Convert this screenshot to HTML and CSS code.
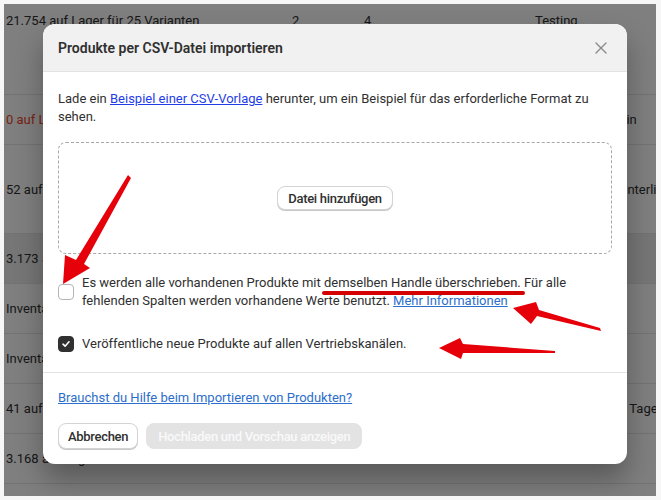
FILE: index.html
```html
<!DOCTYPE html>
<html lang="de">
<head>
    <meta charset="UTF-8">
    <meta name="viewport" content="width=device-width, initial-scale=1.0">
    <title>Produkte per CSV-Datei importieren</title>
    <link rel="stylesheet" href="styles.css">
</head>
<body>
    <div class="screen">
        <!-- Produkttabelle im Hintergrund -->
        <div class="table">
            <div class="row row-first">
                <span>21.754 auf Lager für 25 Varianten</span><span>2</span><span>4</span><span>Testing</span><span></span>
            </div>
            <div class="row">
                <span class="out">0 auf Lager für 1 Variante</span><span>1</span><span>1</span><span>Testing</span><span>Ein</span>
            </div>
            <div class="row row-tall">
                <span>52 auf Lager für 4 Varianten</span><span>1</span><span>2</span><span>Testing</span><span>Unterliegt</span>
            </div>
            <div class="row row-active">
                <span>3.173 auf Lager für 12 Varianten</span><span>2</span><span>3</span><span>Testing</span><span></span>
            </div>
            <div class="row">
                <span>Inventar wird nicht verfolgt</span><span>1</span><span>1</span><span>Testing</span><span></span>
            </div>
            <div class="row">
                <span>Inventar wird nicht verfolgt</span><span>1</span><span>1</span><span>Testing</span><span></span>
            </div>
            <div class="row">
                <span>41 auf Lager für 2 Varianten</span><span>1</span><span>2</span><span>Testing</span><span>3 Tage</span>
            </div>
            <div class="row">
                <span>3.168 auf Lager für 3 Varianten</span><span>1</span><span>1</span><span>Test</span><span></span>
            </div>
            <div class="row"></div>
        </div>

        <div class="backdrop">
            <div class="modal">
                <div class="modal-header">
                    <h2>Produkte per CSV-Datei importieren</h2>
                    <button class="close" aria-label="Schließen">
                        <svg width="12" height="12" viewBox="0 0 12 12"><path d="M1 1L11 11M11 1L1 11" stroke="#8a8a8a" stroke-width="1.4" stroke-linecap="round"/></svg>
                    </button>
                </div>
                <div class="modal-body">
                    <p class="intro">Lade ein <a href="#" class="link-strong">Beispiel einer CSV-Vorlage</a> herunter, um ein Beispiel für das erforderliche Format zu sehen.</p>
                    <div class="dropzone">
                        <button class="btn btn-small">Datei hinzufügen</button>
                    </div>
                    <label class="check check-overwrite">
                        <span class="box"></span>
                        <span>Es werden alle vorhandenen Produkte mit demselben Handle überschrieben. Für alle fehlenden Spalten werden vorhandene Werte benutzt. <a href="#">Mehr Informationen</a></span>
                    </label>
                    <label class="check check-publish">
                        <span class="box box-checked">
                            <svg width="10" height="10" viewBox="0 0 10 10"><path d="M2 5.2L4.1 7.2L8 2.8" fill="none" stroke="#fff" stroke-width="1.6" stroke-linecap="round" stroke-linejoin="round"/></svg>
                        </span>
                        <span>Veröffentliche neue Produkte auf allen Vertriebskanälen.</span>
                    </label>
                </div>
                <div class="modal-footer">
                    <a href="#">Brauchst du Hilfe beim Importieren von Produkten?</a>
                    <div class="actions">
                        <button class="btn">Abbrechen</button>
                        <button class="btn btn-disabled" disabled>Hochladen und Vorschau anzeigen</button>
                    </div>
                </div>
            </div>
        </div>
    </div>

    <!-- rote Markierungen -->
    <svg class="marks" width="661" height="500" viewBox="0 0 661 500">
        <path d="M128 175 L131 178 L84 264 L90 268 L63 284 L65 255 L76 260 Z" fill="#e6000a"/>
        <path d="M600 328 L601 331 L537 316 L531 324 L513 308 L536 302 L539 310 Z" fill="#e6000a"/>
        <path d="M555 351 L555 353 L463 353 L461 359 L439 348 L460 338 L463 344 Z" fill="#e6000a"/>
        <path d="M324 293 L523 293" stroke="#d40000" stroke-width="4" stroke-linecap="round"/>
    </svg>
</body>
</html>
```

FILE: styles.css
```css
body {
    margin: 0;
    background: #f6f6f6;
    font-family: Roboto, 'Liberation Sans', sans-serif;
    color: #303030;
}
.screen {
    position: relative;
    margin: 4px;
    width: 652px;
    height: 492px;
    overflow: hidden;
    background: #fff;
}
.row {
    display: grid;
    grid-template-columns: 286px 72px 171px 84px 1fr;
    align-items: center;
    height: 49px;
    padding-left: 2px;
    border-bottom: 1px solid #e6e6e6;
    font-size: 13px;
    white-space: nowrap;
    overflow: hidden;
}
.row-first {
    height: 91px;
    align-items: start;
    padding-top: 9px;
    box-sizing: border-box;
}
.row-tall {
    height: 88px;
}
.row-active {
    background: #ececec;
}
.out {
    color: #f0452a;
}
.backdrop {
    position: absolute;
    inset: 0;
    background: rgba(0, 0, 0, 0.5);
    padding: 20px 0 0 39px;
}
.modal {
    width: 584px;
    background: #fff;
    border-radius: 12px;
    overflow: hidden;
    box-shadow: 0 16px 28px rgba(0, 0, 0, 0.3);
}
.modal-header {
    display: flex;
    justify-content: space-between;
    align-items: center;
    height: 47px;
    padding: 0 16px 0 15px;
    background: #f1f1f1;
    border-bottom: 1px solid #e3e3e3;
}
.modal-header h2 {
    margin: 0;
    font-size: 14px;
    font-weight: 600;
}
.close {
    display: flex;
    border: none;
    background: none;
    padding: 2px;
    margin-right: 2px;
}
.modal-body {
    padding: 18px 15px 19px;
    border-bottom: 1px solid #e3e3e3;
    font-size: 13px;
    line-height: 18px;
}
.intro {
    margin: 0 0 16px;
}
a {
    color: #2c6ecb;
}
.link-strong {
    color: #1f3ee6;
}
.dropzone {
    display: flex;
    justify-content: center;
    align-items: center;
    height: 110px;
    border: 1px dashed #a8a8a8;
    border-radius: 8px;
}
.btn {
    height: 26px;
    padding: 0 9px;
    border: 1px solid #d4d4d4;
    border-radius: 8px;
    background: #fff;
    box-shadow: 0 1px 0 #c8c8c8;
    font-family: inherit;
    font-size: 13px;
    font-weight: 500;
    letter-spacing: -0.3px;
    color: #303030;
}
.btn-small {
    height: 24px;
    padding: 0 10px;
}
.btn-disabled {
    padding: 0 11px;
    background: #e3e3e3;
    border-color: #e3e3e3;
    box-shadow: none;
    color: #f9f9f9;
}
.check {
    display: flex;
    align-items: center;
    gap: 8px;
}
.check-overwrite {
    margin-top: 20px;
}
.check-publish {
    margin-top: 25px;
}
.box {
    flex: none;
    display: flex;
    justify-content: center;
    align-items: center;
    width: 14px;
    height: 14px;
    border: 1px solid #b5b5b5;
    border-radius: 4px;
    background: #fff;
}
.box-checked {
    background: #303030;
    border-color: #303030;
}
.modal-footer {
    padding: 16px 15px 15px;
    font-size: 13px;
    line-height: 18px;
}
.actions {
    display: flex;
    gap: 8px;
    margin-top: 16px;
}
.marks {
    position: absolute;
    top: 0;
    left: 0;
    pointer-events: none;
}
```
